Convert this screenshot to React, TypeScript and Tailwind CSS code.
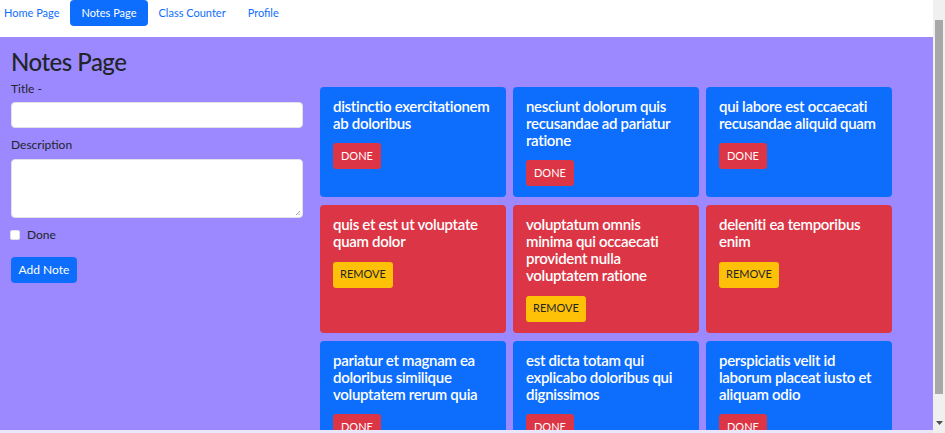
import React from "react";

type Note = { title: string; done: boolean };

const notes: Note[] = [
  { title: "distinctio exercitationem ab doloribus", done: false },
  { title: "nesciunt dolorum quis recusandae ad pariatur ratione", done: false },
  { title: "qui labore est occaecati recusandae aliquid quam", done: false },
  { title: "quis et est ut voluptate quam dolor", done: true },
  { title: "voluptatum omnis minima qui occaecati provident nulla voluptatem ratione", done: true },
  { title: "deleniti ea temporibus enim", done: true },
  { title: "pariatur et magnam ea doloribus similique voluptatem rerum quia", done: false },
  { title: "est dicta totam qui explicabo doloribus qui dignissimos", done: false },
  { title: "perspiciatis velit id laborum placeat iusto et aliquam odio", done: false },
];

export default function App() {
  return (
    <div
      className="flex w-[945px] h-[433px] overflow-hidden bg-white"
      style={{ fontFamily: 'Lato, "Noto Sans", sans-serif' }}
    >
      <div className="flex flex-col w-[933px] h-[433px]">
        <nav className="flex h-[37px] bg-white items-start -ml-[7px] text-[11px]">
          <a className="px-[11px] h-[26px] flex items-center text-[#0d6efd]">Home Page</a>
          <a className="px-[11px] h-[26px] flex items-center text-white bg-[#0d6efd] rounded-[4px]">Notes Page</a>
          <a className="px-[11px] h-[26px] flex items-center text-[#0d6efd]">Class Counter</a>
          <a className="px-[11px] h-[26px] flex items-center text-[#0d6efd]">Profile</a>
        </nav>
        <main className="h-[393px] overflow-hidden bg-[#9c89ff] flex pl-[11px] pt-[10px] gap-[17px]">
          <div className="w-[292px] shrink-0 flex flex-col text-[#212529]">
            <h2 className="text-[24px] leading-[29px] font-medium tracking-[-0.5px] text-[#212529] mb-[4px]">Notes Page</h2>
            <label className="text-[12px] leading-[18px] mb-[4px]">Title -</label>
            <div className="h-[26px] bg-white rounded-[4px] border border-[#dee2e6]" />
            <label className="text-[12px] leading-[18px] mt-[8px] mb-[5px]">Description</label>
            <div className="h-[59px] bg-white rounded-[4px] border border-[#dee2e6] relative">
              <svg className="absolute right-[1px] bottom-[1px]" width="6" height="6" viewBox="0 0 6 6">
                <path d="M5 1L1 5M5 3.5L3.5 5" stroke="#888" strokeWidth="0.8" />
              </svg>
            </div>
            <div className="flex items-center mt-[8px] gap-[7px] -ml-[1px]">
              <span className="w-[10px] h-[10px] bg-white rounded-[2px] border border-[#dee2e6]" />
              <span className="text-[12px] leading-[18px]">Done</span>
            </div>
            <button className="mt-[13px] w-[66px] h-[26px] rounded-[4px] bg-[#0d6efd] text-white text-[12px]">
              Add Note
            </button>
          </div>
          <div className="grid grid-cols-[186px_186px_186px] gap-x-[7px] gap-y-[8px] pt-[40px] content-start">
            {notes.map((n, i) => (
              <div
                key={i}
                className={`rounded-[4px] px-[13px] pt-[11px] pb-[11px] ${n.done ? "bg-[#dc3545]" : "bg-[#0d6efd]"}`}
              >
                <h5 className="text-[15px] leading-[17px] font-semibold tracking-[-0.3px] text-white mb-[10px]">{n.title}</h5>
                {n.done ? (
                  <button className="h-[26px] px-[7px] rounded-[3px] bg-[#ffc107] text-[#212529] text-[11px]">REMOVE</button>
                ) : (
                  <button className="h-[26px] px-[8px] rounded-[3px] bg-[#dc3545] text-white text-[11px]">DONE</button>
                )}
              </div>
            ))}
          </div>
        </main>
        <div className="h-[3px] bg-[#e9e5fb]" />
      </div>
      <div className="w-[12px] h-[433px] bg-[#f0f0f0] flex flex-col items-center">
        <div className="mt-[20px] w-[8px] h-[374px] bg-[#a8a8a8]" />
        <div className="flex-1" />
        <svg width="7" height="4" viewBox="0 0 7 4" className="mb-[8px]">
          <path d="M0 0H7L3.5 4Z" fill="#505050" />
        </svg>
      </div>
    </div>
  );
}
